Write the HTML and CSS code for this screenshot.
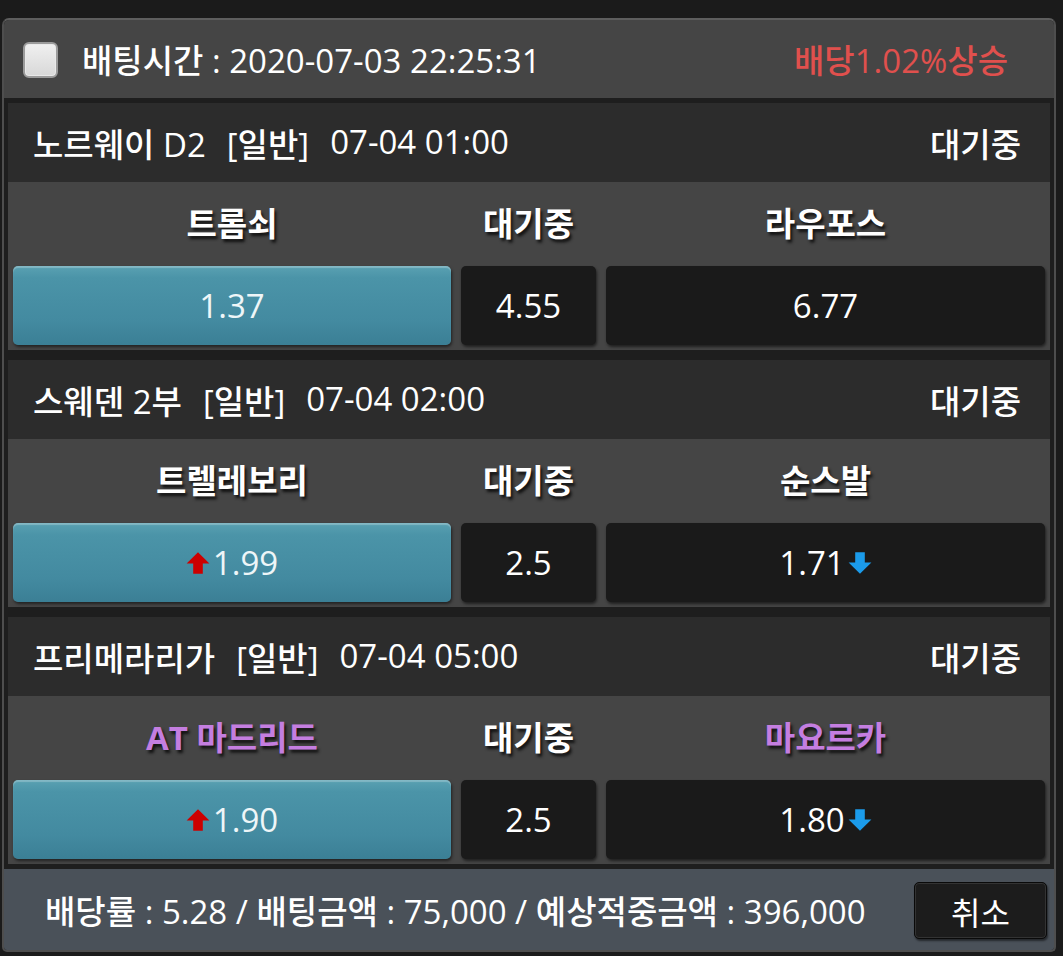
FILE: index.html
```html
<!DOCTYPE html>
<html lang="ko">
<head>
<meta charset="utf-8">
<title>배팅</title>
<link rel="stylesheet" href="styles.css">
</head>
<body>
<div class="panel">
  <div class="head">
    <span class="check"></span>
    <span class="head-title">배팅시간 : 2020-07-03 22:25:31</span>
    <span class="head-rate">배당1.02%상승</span>
  </div>
  <div class="blocks">
    <section class="match">
      <div class="league">
        <div class="league-info"><span>노르웨이 D2</span><span>[일반]</span><span>07-04 01:00</span></div>
        <span class="state">대기중</span>
      </div>
      <div class="teams">
        <span>트롬쇠</span><span>대기중</span><span>라우포스</span>
      </div>
      <div class="odds">
        <div class="odd sel">1.37</div>
        <div class="odd">4.55</div>
        <div class="odd">6.77</div>
      </div>
    </section>
    <section class="match">
      <div class="league">
        <div class="league-info"><span>스웨덴 2부</span><span>[일반]</span><span>07-04 02:00</span></div>
        <span class="state">대기중</span>
      </div>
      <div class="teams">
        <span>트렐레보리</span><span>대기중</span><span>순스발</span>
      </div>
      <div class="odds">
        <div class="odd sel"><svg class="arr up" viewBox="0 0 20 20"><polygon points="10,1 19.5,10.5 14,10.5 14,19 6,19 6,10.5 0.5,10.5"/></svg>1.99</div>
        <div class="odd">2.5</div>
        <div class="odd">1.71<svg class="arr down" viewBox="0 0 20 20"><polygon points="10,19 19.5,9.5 14,9.5 14,1 6,1 6,9.5 0.5,9.5"/></svg></div>
      </div>
    </section>
    <section class="match">
      <div class="league">
        <div class="league-info"><span>프리메라리가</span><span>[일반]</span><span>07-04 05:00</span></div>
        <span class="state">대기중</span>
      </div>
      <div class="teams">
        <span class="pur">AT 마드리드</span><span>대기중</span><span class="pur">마요르카</span>
      </div>
      <div class="odds">
        <div class="odd sel"><svg class="arr up" viewBox="0 0 20 20"><polygon points="10,1 19.5,10.5 14,10.5 14,19 6,19 6,10.5 0.5,10.5"/></svg>1.90</div>
        <div class="odd">2.5</div>
        <div class="odd">1.80<svg class="arr down" viewBox="0 0 20 20"><polygon points="10,19 19.5,9.5 14,9.5 14,1 6,1 6,9.5 0.5,9.5"/></svg></div>
      </div>
    </section>
  </div>
  <div class="foot">
    <span class="foot-text">배당률 : 5.28 / 배팅금액 : 75,000 / 예상적중금액 : 396,000</span>
    <button class="cancel">취소</button>
  </div>
</div>
</body>
</html>
```

FILE: styles.css
```css
* { box-sizing: border-box; }
html, body { margin: 0; padding: 0; }
body {
  background: #1b1b1b;
  width: 1063px;
  height: 956px;
  overflow: hidden;
  padding-top: 18px;
  font-family: "Open Sans", "Noto Sans CJK KR", sans-serif;
  font-size: 33px;
  font-weight: 500;
  color: #fff;
}
.panel {
  margin-left: 2px;
  width: 1054px;
  background: #1e1e1e;
  border: 2px solid #4e4e4e;
  border-top-color: #5e5e5e;
  border-radius: 7px 7px 5px 5px;
  overflow: hidden;
}
.head {
  height: 78px;
  background: #454545;
  display: flex;
  align-items: center;
  padding: 0 46px 0 19px;
}
.check {
  width: 35px;
  height: 36px;
  border-radius: 6px;
  border: 2px solid #9b9b9b;
  background: linear-gradient(#f0f0f0, #d8d8d8);
  box-shadow: inset 0 0 0 1px #e9e9e9;
  margin-right: 24px;
  margin-top: 2px;
}
.head-title { flex: 1; }
.head-rate { color: #e0504d; }
.blocks {
  padding: 5px 4px 0 4px;
  display: flex;
  flex-direction: column;
  gap: 10px;
}
.league {
  height: 79px;
  background: #2c2c2c;
  display: flex;
  align-items: center;
  justify-content: space-between;
  padding: 0 29px 0 25px;
}
.league-info { display: flex; gap: 21px; }
.teams {
  height: 80px;
  background: #454545;
  display: grid;
  grid-template-columns: 438px 135px 1fr;
  column-gap: 10px;
  padding: 0 5px;
  align-items: center;
  text-align: center;
  font-weight: 700;
  text-shadow: 2px 3px 3px #111;
}
.pur { color: #c47ee0; }
.odds {
  background: #454545;
  display: grid;
  grid-template-columns: 438px 135px 1fr;
  column-gap: 10px;
  padding: 4px 5px 5px;
}
.odd {
  height: 79px;
  border-radius: 5px;
  background: #1a1a1a;
  box-shadow: 1px 2px 3px rgba(0,0,0,0.55);
  display: flex;
  align-items: center;
  justify-content: center;
  gap: 2px;
  font-weight: 500;
}
.odd.sel {
  background: linear-gradient(#5aa1b2 0%, #4b94a8 15%, #438aa0 70%, #3b7f95 100%);
  box-shadow: inset 0 2px 1px rgba(255,255,255,0.25), 1px 2px 3px rgba(0,0,0,0.5);
  color: #eef6f8;
}
.arr { width: 24px; height: 24px; }
.arr.up { fill: #cc0000; margin-right: 1px; }
.arr.down { fill: #1b9bea; margin-left: 1px; }
.foot {
  margin-top: 5px;
  height: 81px;
  background: #4a5159;
  display: flex;
  align-items: center;
  justify-content: space-between;
  padding: 0 7px 0 41px;
}
.cancel {
  width: 133px;
  height: 57px;
  background: #1c1c1c;
  border: 1px solid #0a0a0a;
  border-radius: 5px;
  box-shadow: inset 0 0 0 1px #333, 1px 2px 2px rgba(0,0,0,0.5);
  color: #fff;
  font-family: "Noto Sans CJK KR", sans-serif;
  font-size: 32px;
  font-weight: 400;
  padding: 0;
  margin-top: 2px;
}
```
